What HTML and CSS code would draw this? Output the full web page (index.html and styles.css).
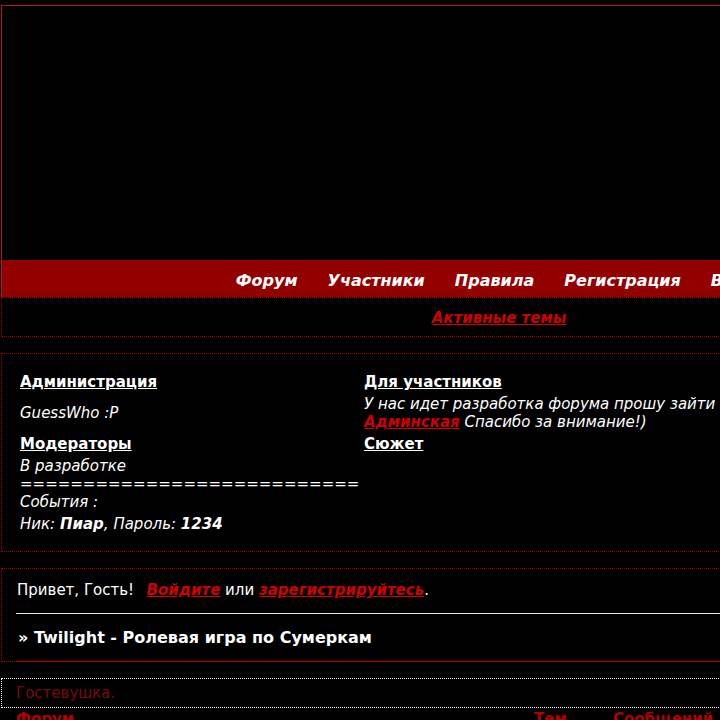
FILE: index.html
```html
<!DOCTYPE html>
<html lang="ru">
<head>
  <meta charset="UTF-8" />
  <title>Twilight - Ролевая игра по Сумеркам</title>
  <link rel="stylesheet" href="styles.css">
</head>
<body>

  <div class="wrap">

    <div class="header"></div>

    <div class="nav">
      <a href="#">Форум</a>
      <a href="#">Участники</a>
      <a href="#">Правила</a>
      <a href="#">Регистрация</a>
      <a href="#">Вход</a>
    </div>

    <div class="active-row">
      <a class="red-link" href="#">Активные темы</a>
    </div>

    <div class="block info">
      <div class="col">
        <div class="head">Администрация</div>
        <p class="name">GuessWho :P</p>
        <div class="head">Модераторы</div>
        <p class="txt">В разработке<br>===========================<br>События :</p>
        <p class="txt">Ник: <b>Пиар</b>, Пароль: <b>1234</b></p>
      </div>
      <div class="col right">
        <div class="head">Для участников</div>
        <p class="txt">У нас идет разработка форума прошу зайти <a class="red-link" href="#">Админская</a> Спасибо за внимание!)</p>
        <div class="head">Сюжет</div>
      </div>
    </div>

    <div class="block hello">
      <div class="greet">
        Привет, Гость!&nbsp;
        <a class="red-link login" href="#">Войдите</a> или
        <a class="red-link" href="#">зарегистрируйтесь</a>.
      </div>
      <div class="title">» Twilight - Ролевая игра по Сумеркам</div>
    </div>

    <div class="guest">Гостевушка.</div>

    <div class="cat-head">
      <span>Форум</span>
      <span>Тем</span>
      <span>Сообщений</span>
    </div>

  </div>

</body>
</html>
```

FILE: styles.css
```css
html {
  overflow: hidden;
}

body {
  margin: 0;
  padding: 5px 0 0 1px;
  background-color: #000;
  color: #fff;
  font-family: "DejaVu Sans", Verdana, sans-serif;
  font-size: 15px;
  line-height: 18px;
}

.wrap {
  width: 996px;
}

.header {
  height: 254px;
  border: 1px solid #b81428;
  border-bottom: none;
  background-color: #000;
}

.nav {
  box-sizing: border-box;
  height: 37px;
  padding: 11px 6px 0 0;
  background-color: #930000;
  border-left: 1px solid #c0101c;
  display: flex;
  justify-content: center;
  align-items: flex-start;
  gap: 30px;
}

.nav a {
  color: #fff;
  font-size: 16px;
  line-height: 20px;
  font-weight: bold;
  font-style: italic;
  text-decoration: none;
}

.red-link {
  color: #d00000;
  font-weight: bold;
  font-style: italic;
  text-decoration: underline;
}

.active-row {
  border: 1px dotted #b00000;
  padding: 11px 0 9px;
  text-align: center;
}

.block {
  border: 1px dotted #b00000;
  margin-top: 16px;
}

.info {
  display: grid;
  grid-template-columns: 344px 360px;
  padding: 19px 0 18px 18px;
}

.head {
  font-weight: bold;
  text-decoration: underline;
}

.info p {
  margin: 0;
  font-style: italic;
}

.info .name {
  margin: 13px 0;
}

.info .txt {
  margin-top: 4px;
}

.right .txt {
  margin-bottom: 4px;
}

.greet {
  padding: 12px 0 14px 15px;
}

.login {
  margin-left: 3px;
}

.title {
  margin-left: 14px;
  border-top: 1px solid #f3dede;
  box-shadow: 0 1px 0 #c00000;
  padding: 14px 0 13px 2px;
  font-size: 16px;
  line-height: 20px;
  font-weight: bold;
}

.guest {
  margin-top: 16px;
  border: 1px dotted #fff;
  padding: 5px 0 5px 14px;
  color: #7a0a0a;
}

.cat-head {
  display: grid;
  grid-template-columns: 518px 79px auto;
  padding: 2px 0 0 15px;
  color: #b00000;
  font-weight: bold;
}
```
